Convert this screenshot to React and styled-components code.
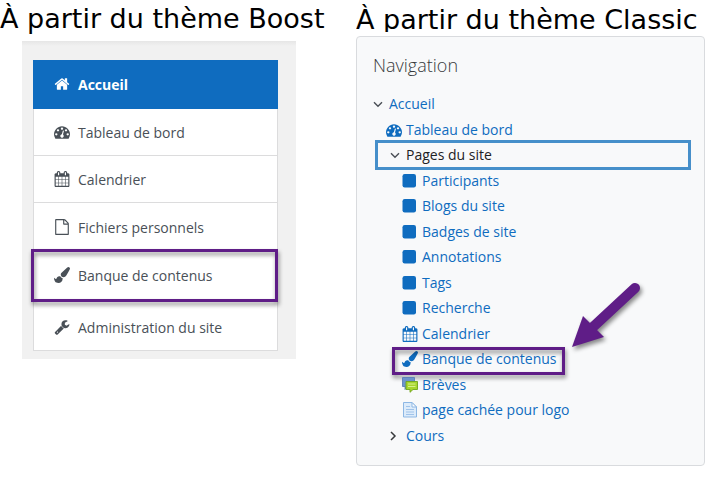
import React from "react";
import styled, { createGlobalStyle, css } from "styled-components";

const purple = "#5f1d87";
const blue = "#0f6cbf";
const bodyFont = '"Open Sans", "Noto Sans", sans-serif';

const GlobalStyle = createGlobalStyle`
  *, *::before, *::after { box-sizing: border-box; }
  body { margin: 0; background: #fff; font-family: ${bodyFont}; font-size: 14px; }
`;

const Page = styled.main`
  display: grid;
  grid-template-columns: 89fr 91fr;
  align-items: start;
`;

const Column = styled.section`
  min-width: 0;
`;

const Title = styled.h1`
  margin: 0;
  height: ${(p) => p.$height}px;
  padding-top: ${(p) => p.$top}px;
  overflow: hidden;
  font: 400 27px/36px "DejaVu Sans", sans-serif;
  color: #000;
  white-space: nowrap;
`;

const Drawer = styled.nav`
  margin: 0 60px 0 22px;
  padding: 19px 18px 8px 11px;
  background: linear-gradient(#e6e6e6, #f1f1f1 5px);
`;

const DrawerList = styled.ul`
  list-style: none;
  margin: 0;
  padding: 0;
`;

const highlight = css`
  &::after {
    content: "";
    position: absolute;
    border: 3px solid ${purple};
    filter: drop-shadow(1px 3px 2px rgba(0, 0, 0, 0.45));
    pointer-events: none;
  }
`;

const DrawerItem = styled.li`
  position: relative;
  z-index: ${(p) => (p.$marked ? 1 : 0)};
  background: #fff;
  border: 1px solid #dcdcdd;
  border-top: 0;
  ${(p) => p.$active && css`background: ${blue}; border-color: ${blue};`}
  ${(p) => p.$marked && css`
    padding-bottom: 6px;
    border-bottom: 0;
    ${highlight}
    &::after { inset: -3px -1px 2px -3px; }
  `}
`;

const DrawerLink = styled.a`
  display: flex;
  align-items: center;
  gap: 8px;
  height: ${(p) => (p.$tall ? 48 : 46)}px;
  padding-left: 20px;
  color: ${(p) => (p.$active ? "#fff" : "#495057")};
  font-weight: ${(p) => (p.$active ? 700 : 400)};
  text-decoration: none;
  white-space: nowrap;
`;

const Glyph = styled.svg`
  flex: none;
  width: 16px;
  height: 16px;
  fill: currentColor;
  overflow: visible;
`;

const Block = styled.nav`
  margin: 4px 15px 0 0;
  padding: 16px 13px 17px 12px;
  border: 1px solid #d9dbde;
  border-radius: 4px;
  background: #f8f9fa;
`;

const BlockTitle = styled.h2`
  margin: 0 0 14px 4px;
  font-size: 18px;
  line-height: 24px;
  font-weight: 300;
  color: #373a3c;
`;

const Tree = styled.ul`
  list-style: none;
  margin: 0;
  padding: 0;
  display: grid;
  grid-auto-rows: 26px 25px;
`;

const TreeItem = styled.li`
  position: relative;
  display: flex;
  align-items: center;
  padding-left: ${(p) => [0, 17, 33][p.$depth]}px;
  ${(p) => p.$focused && css`
    &::before {
      content: "";
      position: absolute;
      inset: -2px 0 -2px 6px;
      border: 3px solid #468fca;
    }
  `}
`;

const TreeLink = styled.a`
  position: relative;
  display: flex;
  align-items: center;
  gap: 4px;
  line-height: 24px;
  color: ${(p) => (p.$focused ? "#1d2125" : blue)};
  text-decoration: none;
  white-space: nowrap;
  ${(p) => p.$marked && css`
    ${highlight}
    &::after { inset: 0 -8px -4px -10px; }
  `}
`;

const ArrowMark = styled.svg`
  position: absolute;
  left: calc(100% + 11px);
  bottom: 18px;
  width: 76px;
  height: 76px;
  overflow: visible;
  filter: drop-shadow(2px 3px 2px rgba(0, 0, 0, 0.45));
`;

const paths = {
  home: "M1472 992v480q0 26-19 45t-45 19h-384v-384h-256v384h-384q-26 0-45-19t-19-45v-480q0-1 .5-3t.5-3l575-474 575 474q1 2 1 6zm223-69l-62 74q-8 9-21 11h-3q-13 0-21-7l-692-577-692 577q-12 8-24 7-13-2-21-11l-62-74q-8-10-7-23.5t11-21.5l719-599q32-26 76-26t76 26l244 204v-195q0-14 9-23t23-9h192q14 0 23 9t9 23v408l219 182q10 8 11 21.5t-7 23.5z",
  gauge: "M384 1152q0-53-37.5-90.5t-90.5-37.5-90.5 37.5-37.5 90.5 37.5 90.5 90.5 37.5 90.5-37.5 37.5-90.5zm192-448q0-53-37.5-90.5t-90.5-37.5-90.5 37.5-37.5 90.5 37.5 90.5 90.5 37.5 90.5-37.5 37.5-90.5zm428 481l101-382q6-26-7.5-48.5t-38.5-29.5-48 6.5-30 39.5l-101 382q-60 5-107 43.5t-63 98.5q-20 77 20 146t117 89 146-20 89-117q16-60-6-117t-72-91zm660-33q0-53-37.5-90.5t-90.5-37.5-90.5 37.5-37.5 90.5 37.5 90.5 90.5 37.5 90.5-37.5 37.5-90.5zm-640-640q0-53-37.5-90.5t-90.5-37.5-90.5 37.5-37.5 90.5 37.5 90.5 90.5 37.5 90.5-37.5 37.5-90.5zm448 192q0-53-37.5-90.5t-90.5-37.5-90.5 37.5-37.5 90.5 37.5 90.5 90.5 37.5 90.5-37.5 37.5-90.5zm320 448q0 261-141 483-19 29-54 29h-1402q-35 0-54-29-141-221-141-483 0-182 71-348t191-286 286-191 348-71 348 71 286 191 191 286 71 348z",
  calendar: "M192 1664h288v-288h-288v288zm352 0h320v-288h-320v288zm-352-352h288v-320h-288v320zm352 0h320v-320h-320v320zm-352-384h288v-288h-288v288zm736 736h320v-288h-320v288zm-384-736h320v-288h-320v288zm768 736h288v-288h-288v288zm-384-352h320v-320h-320v320zm-352-864v-288q0-13-9.5-22.5t-22.5-9.5h-64q-13 0-22.5 9.5t-9.5 22.5v288q0 13 9.5 22.5t22.5 9.5h64q13 0 22.5-9.5t9.5-22.5zm736 864h288v-320h-288v320zm-384-384h320v-288h-320v288zm384 0h288v-288h-288v288zm32-480v-288q0-13-9.5-22.5t-22.5-9.5h-64q-13 0-22.5 9.5t-9.5 22.5v288q0 13 9.5 22.5t22.5 9.5h64q13 0 22.5-9.5t9.5-22.5zm384-64v1280q0 52-38 90t-90 38h-1408q-52 0-90-38t-38-90v-1280q0-52 38-90t90-38h128v-96q0-66 47-113t113-47h64q66 0 113 47t47 113v96h384v-96q0-66 47-113t113-47h64q66 0 113 47t47 113v96h128q52 0 90 38t38 90z",
  file: "M1596 380q28 28 48 76t20 88v1152q0 40-28 68t-68 28h-1344q-40 0-68-28t-28-68v-1600q0-40 28-68t68-28h896q40 0 88 20t76 48zm-444-244v376h376q-10-29-22-41l-313-313q-12-12-41-22zm384 1528v-1024h-416q-40 0-68-28t-28-68v-416h-768v1536h1280z",
  brush: "M1615 0q70 0 122.5 46.5t52.5 116.5q0 63-45 151-332 629-465 752-97 91-218 91-126 0-216.5-92.5t-90.5-219.5q0-128 92-212l638-579q59-54 130-54zm-909 1034q39 76 106.5 130t150.5 76l1 71q4 213-129.5 347t-348.5 134q-123 0-218-46.5t-152.5-127.5-86.5-183-29-220q7 5 41 30t62 44.5 59 36.5 46 17q41 0 55-37 25-66 57.5-112.5t69.5-76 88-47.5 103-25.5 125-10.5z",
  wrench: "M448 1472q0-26-19-45t-45-19-45 19-19 45 19 45 45 19 45-19 19-45zm644-420l-682 682q-37 37-90 37-52 0-91-37l-106-108q-38-36-38-90 0-53 38-91l681-681q39 98 114.5 173.5t173.5 114.5zm634-435q0 39-23 106-47 134-164.5 217.5t-258.5 83.5q-185 0-316.5-131.5t-131.5-316.5 131.5-316.5 316.5-131.5q58 0 121.5 16.5t107.5 46.5q16 11 16 28t-16 28l-293 169v224l193 107q5-3 79-48.5t135.5-81 70.5-35.5q15 0 23.5 10t8.5 25z",
};

const drawings = {
  square: <rect x="0.5" y="1" width="13.5" height="13.5" rx="2.2" />,
  down: <path d="M5 6.2l4 4 4-4" fill="none" stroke="#4a4f55" strokeWidth="1.4" />,
  right: <path d="M5 4l4 4-4 4" fill="none" stroke="#373a3c" strokeWidth="1.5" />,
  chat: (
    <>
      <path d="M0.5 0.5h12v9H6l-3 3v-3H0.5z" fill="#6d94cc" stroke="#5079b4" strokeWidth="0.8" />
      <path d="M4 4.5h11.5v8H11l-3 2.8v-2.8H4z" fill="#a6d62f" stroke="#6fa51c" strokeWidth="0.9" />
      <path d="M6 7h7.5M6 9.5h7.5" stroke="#d8f08c" strokeWidth="1.2" />
    </>
  ),
  page: (
    <>
      <path d="M1.5 0.5h8.5l4.5 4.5v10H1.5z" fill="#dcebfa" stroke="#8db7e4" />
      <path d="M10 0.5V5h4.5z" fill="#fff" stroke="#8db7e4" />
      <path d="M4 4.5h4M4 7.5h8M4 10h8M4 12.5h8" stroke="#9fc3ea" />
    </>
  ),
};

function Icon({ name }) {
  const path = paths[name];
  return (
    <Glyph viewBox={path ? "0 0 1792 1792" : "0 0 16 16"} aria-hidden="true">
      {path ? <path d={path} /> : drawings[name]}
    </Glyph>
  );
}

const drawerItems = [
  { icon: "home", label: "Accueil", active: true, tall: true },
  { icon: "gauge", label: "Tableau de bord" },
  { icon: "calendar", label: "Calendrier" },
  { icon: "file", label: "Fichiers personnels", tall: true },
  { icon: "brush", label: "Banque de contenus", marked: true },
  { icon: "wrench", label: "Administration du site" },
];

const treeItems = [
  { depth: 0, icon: "down", label: "Accueil" },
  { depth: 1, icon: "gauge", label: "Tableau de bord" },
  { depth: 1, icon: "down", label: "Pages du site", focused: true },
  { depth: 2, icon: "square", label: "Participants" },
  { depth: 2, icon: "square", label: "Blogs du site" },
  { depth: 2, icon: "square", label: "Badges de site" },
  { depth: 2, icon: "square", label: "Annotations" },
  { depth: 2, icon: "square", label: "Tags" },
  { depth: 2, icon: "square", label: "Recherche" },
  { depth: 2, icon: "calendar", label: "Calendrier" },
  { depth: 2, icon: "brush", label: "Banque de contenus", marked: true },
  { depth: 2, icon: "chat", label: "Brèves" },
  { depth: 2, icon: "page", label: "page cachée pour logo" },
  { depth: 1, icon: "right", label: "Cours" },
];

export default function App() {
  return (
    <>
      <GlobalStyle />
      <Page>
        <Column>
          <Title $height={41} $top={1}>À partir du thème Boost</Title>
          <Drawer aria-label="Boost">
            <DrawerList>
              {drawerItems.map((item) => (
                <DrawerItem key={item.label} $active={item.active} $marked={item.marked}>
                  <DrawerLink href="#" $active={item.active} $tall={item.tall}>
                    <Icon name={item.icon} />
                    {item.label}
                  </DrawerLink>
                </DrawerItem>
              ))}
            </DrawerList>
          </Drawer>
        </Column>
        <Column>
          <Title $height={32} $top={2}>À partir du thème Classic</Title>
          <Block aria-label="Classic">
            <BlockTitle>Navigation</BlockTitle>
            <Tree>
              {treeItems.map((item) => (
                <TreeItem key={item.label} $depth={item.depth} $focused={item.focused}>
                  <TreeLink href="#" $focused={item.focused} $marked={item.marked}>
                    <Icon name={item.icon} />
                    {item.label}
                    {item.marked && (
                      <ArrowMark viewBox="0 0 76 76" aria-hidden="true">
                        <path d="M25 50L67 11" stroke={purple} strokeWidth="10" strokeLinecap="round" />
                        <path d="M4 70L15 39L36 60z" fill={purple} />
                      </ArrowMark>
                    )}
                  </TreeLink>
                </TreeItem>
              ))}
            </Tree>
          </Block>
        </Column>
      </Page>
    </>
  );
}
